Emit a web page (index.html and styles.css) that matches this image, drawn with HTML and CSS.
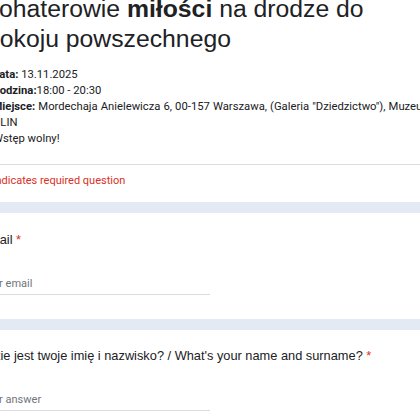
FILE: index.html
```html
<!DOCTYPE html>
<html lang="pl">
<head>
    <meta charset="UTF-8">
    <meta name="viewport" content="width=device-width, initial-scale=1.0">
    <title>Bohaterowie miłości na drodze do pokoju powszechnego</title>
    <link rel="stylesheet" href="styles.css">
</head>
<body>
    <div class="form">
        <div class="card header-card">
            <h1 class="form-title">Bohaterowie <b>miłości</b> na drodze do pokoju powszechnego</h1>
            <div class="form-desc">
                <div class="desc-line"><b>Data:</b> 13.11.2025</div>
                <div class="desc-line"><b>Godzina:</b>18:00 - 20:30</div>
                <div class="desc-line place"><b>Miejsce:</b> Mordechaja Anielewicza 6, 00-157 Warszawa, (Galeria "Dziedzictwo"), Muzeum</div>
                <div class="desc-line wrap">POLIN</div>
                <div class="desc-line free">Wstęp wolny!</div>
            </div>
            <div class="required-note">* Indicates required question</div>
        </div>

        <div class="card question">
            <div class="question-title">Email <span class="required">*</span></div>
            <div class="answer">Your email</div>
        </div>

        <div class="card question">
            <div class="question-title">Jakie jest twoje imię i nazwisko? / What's your name and surname? <span class="required">*</span></div>
            <div class="answer">Your answer</div>
        </div>
    </div>
</body>
</html>
```

FILE: styles.css
```css
body {
    margin: 0;
    background-color: #e4eaf3;
    overflow: hidden;
}
.form {
    margin: -20px 0 0 -40px;
    width: 500px;
    display: flex;
    flex-direction: column;
    gap: 11px;
}
.card {
    background-color: #fff;
    padding: 0 24px;
}
.header-card {
    padding-top: 13.5px;
    padding-bottom: 13px;
}
.form-title {
    width: 440px;
    margin: 0;
    padding-left: 2px;
    text-indent: -3.5px;
    font-family: "Liberation Sans", Arial, sans-serif;
    font-size: 24.75px;
    font-weight: normal;
    line-height: 30px;
    color: #202124;
}
.form-title b {
    font-weight: bold;
}
.form-desc {
    margin-top: 13.5px;
    padding-bottom: 17px;
    border-bottom: 1px solid #dadce0;
    font-family: Roboto, sans-serif;
    font-size: 11.25px;
    line-height: 16px;
    color: #202124;
}
.desc-line {
    padding-left: 8px;
    white-space: nowrap;
}
.desc-line b {
    font-weight: bold;
}
.desc-line.place {
    padding-left: 8.5px;
    word-spacing: 0.3px;
}
.desc-line.wrap {
    padding-left: 1.5px;
}
.desc-line.free {
    padding-left: 9px;
}
.required-note {
    padding-top: 8px;
    padding-left: 1px;
    font-family: Roboto, sans-serif;
    font-size: 11px;
    line-height: 16px;
    color: #d93025;
}
.question {
    padding-top: 16.5px;
    padding-bottom: 24px;
    padding-left: 20.5px;
}
.question-title {
    font-family: "Liberation Sans", Arial, sans-serif;
    font-size: 12.8px;
    line-height: 20px;
    color: #202124;
}
.required {
    color: #d93025;
}
.answer {
    margin-top: 26px;
    width: 229px;
    padding-bottom: 2px;
    border-bottom: 1px solid #dadce0;
    font-family: Roboto, sans-serif;
    font-size: 11px;
    line-height: 16px;
    color: #70757a;
}
```
